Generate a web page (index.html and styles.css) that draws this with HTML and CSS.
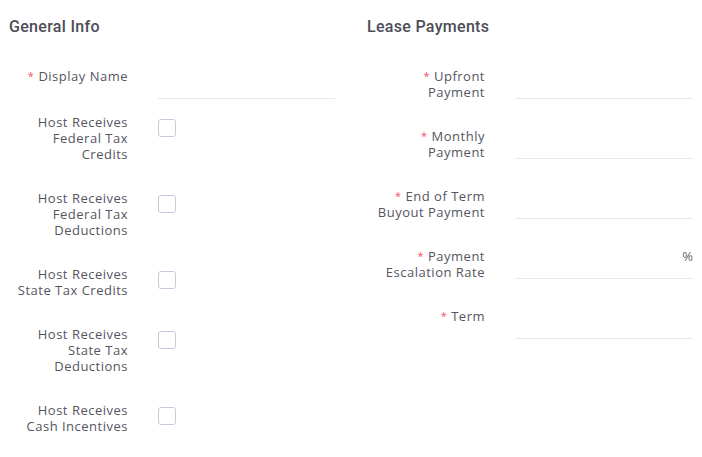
FILE: index.html
```html
<!DOCTYPE html>
<html lang="en">
<head>
    <meta charset="UTF-8">
    <meta name="viewport" content="width=device-width, initial-scale=1.0">
    <title>Lease Form</title>
    <link rel="stylesheet" href="styles.css">
</head>
<body>
    <div class="page">
        <section class="column">
            <h2>General Info</h2>
            <div class="row row-short">
                <label class="label"><span class="req">*</span>Display Name</label>
                <div class="input"></div>
            </div>
            <div class="row">
                <label class="label">Host Receives<br>Federal Tax<br>Credits</label>
                <span class="check"></span>
            </div>
            <div class="row">
                <label class="label">Host Receives<br>Federal Tax<br>Deductions</label>
                <span class="check"></span>
            </div>
            <div class="row">
                <label class="label">Host Receives<br>State Tax Credits</label>
                <span class="check"></span>
            </div>
            <div class="row">
                <label class="label">Host Receives<br>State Tax<br>Deductions</label>
                <span class="check"></span>
            </div>
            <div class="row">
                <label class="label">Host Receives<br>Cash Incentives</label>
                <span class="check"></span>
            </div>
        </section>

        <section class="column column-right">
            <h2>Lease Payments</h2>
            <div class="row">
                <label class="label"><span class="req">*</span>Upfront<br>Payment</label>
                <div class="input"></div>
            </div>
            <div class="row">
                <label class="label"><span class="req">*</span>Monthly<br>Payment</label>
                <div class="input"></div>
            </div>
            <div class="row">
                <label class="label"><span class="req">*</span>End of Term<br>Buyout Payment</label>
                <div class="input"></div>
            </div>
            <div class="row">
                <label class="label"><span class="req">*</span>Payment<br>Escalation Rate</label>
                <div class="input"><span class="suffix">%</span></div>
            </div>
            <div class="row">
                <label class="label"><span class="req">*</span>Term</label>
                <div class="input"></div>
            </div>
        </section>
    </div>
</body>
</html>
```

FILE: styles.css
```css
body {
    margin: 0;
    background: #ffffff;
    font-family: "Open Sans", "Noto Sans", sans-serif;
    color: #55555f;
}

.page {
    display: flex;
    gap: 32px;
    padding: 15px 9px 0 9px;
}

.column {
    flex: 1;
}

h2 {
    margin: 0 0 29px 0;
    font-family: Roboto, sans-serif;
    font-size: 16px;
    font-weight: 500;
    letter-spacing: 0.3px;
    line-height: 24px;
    color: #4d4d57;
}

.row {
    display: grid;
    grid-template-columns: 119px 1fr;
    column-gap: 30px;
    align-items: start;
    margin-bottom: 28px;
}

.column-right .row {
    grid-template-columns: 118px 1fr;
}

.row-short {
    margin-bottom: 15px;
}

.label {
    text-align: right;
    font-size: 13px;
    letter-spacing: 0.5px;
    line-height: 16px;
    color: #55555f;
}

.req {
    color: #f2506a;
    font-size: 11px;
    margin-right: 4px;
    vertical-align: 1px;
}

.input {
    height: 30px;
    border-bottom: 1px solid #e6e7ef;
    display: flex;
    justify-content: flex-end;
    align-items: flex-start;
}

.suffix {
    font-size: 13px;
    line-height: 16px;
    color: #66666e;
}

.check {
    width: 16px;
    height: 16px;
    margin-top: 5px;
    border: 1px solid #c7cadb;
    border-radius: 3px;
}
```
